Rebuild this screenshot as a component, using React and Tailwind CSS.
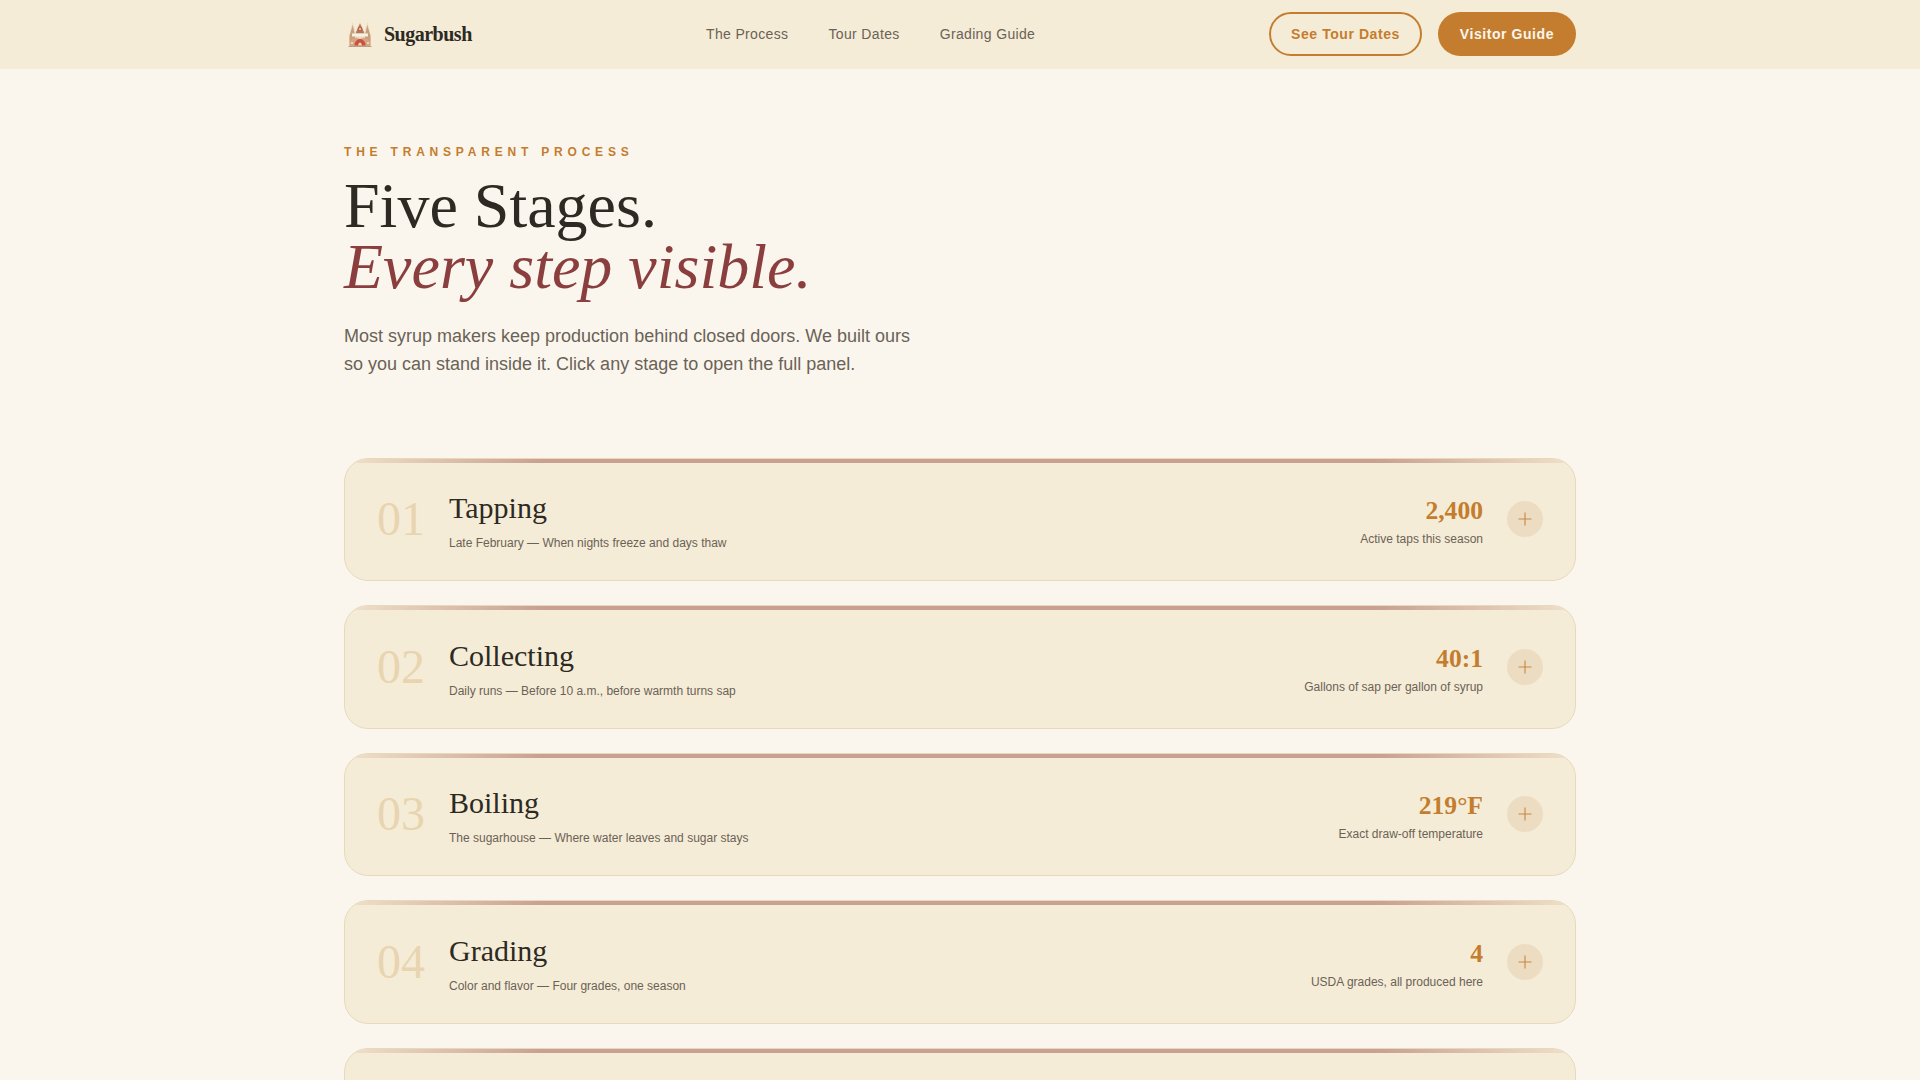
const stages = [
  { num: '01', title: 'Tapping', sub: 'Late February — When nights freeze and days thaw', stat: '2,400', label: 'Active taps this season' },
  { num: '02', title: 'Collecting', sub: 'Daily runs — Before 10 a.m., before warmth turns sap', stat: '40:1', label: 'Gallons of sap per gallon of syrup' },
  { num: '03', title: 'Boiling', sub: 'The sugarhouse — Where water leaves and sugar stays', stat: '219°F', label: 'Exact draw-off temperature' },
  { num: '04', title: 'Grading', sub: 'Color and flavor — Four grades, one season', stat: '4', label: 'USDA grades, all produced here' },
  { num: '05', title: 'Bottling', sub: 'Hot-packed — Sealed the same day', stat: '180°F', label: 'Bottling temperature' },
];

const Logo = () => (
  <svg viewBox="0 0 24 26" className="w-6 h-[26px] shrink-0">
    <path d="M1 25 L1 14 L4.7 1 L7.5 11 L12 0.5 L16.5 11 L19.3 1 L23 14 L23 25 Z" fill="#ecdcc0" />
    <path d="M1.5 15 L4.7 4 L7 15 L7 21 L1.5 21 Z" fill="#c79f7c" />
    <path d="M17 15 L19.3 4 L22.5 15 L22.5 21 L17 21 Z" fill="#c79f7c" />
    <path d="M12 2.5 L16.5 12.5 L7.5 12.5 Z" fill="#a87c60" />
    <circle cx="12" cy="8" r="2.4" fill="#c9614c" />
    <circle cx="12" cy="8" r="0.9" fill="#f0dcc0" />
    <path d="M4 12.5 H20 V15.5 H4 Z" fill="#f7efe0" />
    <path d="M1.5 21 C5 16 9 16 12 18.5 C15 16 19 16 22.5 21 L22.5 25 L1.5 25 Z" fill="#d8a284" />
    <path d="M6.5 24.5 C6.5 20.5 9.5 18 12 18 C14.5 18 17.5 20.5 17.5 24.5 Z" fill="#c9503f" />
    <path d="M10.2 24.5 C10.2 22.5 11 21.5 12 21.5 C13 21.5 13.8 22.5 13.8 24.5 Z" fill="#f0d4b4" />
    <path d="M0.5 25.5 H23.5" stroke="#b3a08c" strokeWidth="1" />
    <circle cx="4" cy="22" r="1" fill="#f3e2c8" />
    <circle cx="20" cy="22" r="1" fill="#f3e2c8" />
  </svg>
);

const StageCard = ({ stage }) => (
  <div className="relative overflow-hidden rounded-[24px] border border-[#e8d9bc] bg-[#f5ecd7] h-[123.5px] px-8 flex items-center">
    <div className="absolute top-0 left-0 right-0 h-1 bg-[linear-gradient(90deg,#f0e2ca,#c9a091_16%,#c9a091_84%,#f0e2ca)]" />
    <div className="font-['Liberation_Serif',serif] text-[48px] leading-none text-[#e8d5b0] w-[72px] whitespace-nowrap">{stage.num}</div>
    <div className="flex-1 min-w-0 pt-[3px]">
      <h3 className="font-['Liberation_Serif',serif] text-[30px] leading-[38px] text-[#2c2a22]">{stage.title}</h3>
      <p className="mt-[7px] text-[12px] leading-[18px] text-[#6b6256]">{stage.sub}</p>
    </div>
    <div className="text-right pt-[5px]">
      <div className="font-['Liberation_Serif',serif] font-bold text-[25.6px] leading-[32px] text-[#c47d2e]">{stage.stat}</div>
      <div className="mt-[3px] text-[12px] leading-[18px] text-[#6b6256]">{stage.label}</div>
    </div>
    <div className="ml-6 w-9 h-9 rounded-full bg-[#ecdcc2] flex items-center justify-center shrink-0">
      <svg viewBox="0 0 16 16" className="w-4 h-4" fill="none" stroke="#c9873f" strokeWidth="1.1">
        <path d="M8 1.5 V14.5 M1.5 8 H14.5" />
      </svg>
    </div>
  </div>
);

export default function App() {
  return (
    <div className="h-screen overflow-hidden bg-[#faf6ee] font-['Liberation_Sans',sans-serif]">
      <nav className="h-[69px] border-b border-[#f5ecd7] bg-[#f5ecd7] flex justify-center">
        <div className="w-[1232px] flex items-center">
          <div className="flex items-center gap-3 w-[362px] pl-[4px]">
            <Logo />
            <span className="font-['Liberation_Serif',serif] font-bold text-[20px] tracking-[-0.5px] text-[#2c2a22]">Sugarbush</span>
          </div>
          <div className="flex items-center gap-10 text-[14px] tracking-[0.35px] text-[#6b6256]">
            <a>The Process</a>
            <a>Tour Dates</a>
            <a>Grading Guide</a>
          </div>
          <div className="ml-auto flex items-center gap-4">
            <button className="h-11 px-5 rounded-full border-2 border-[#c47d2e] text-[14px] font-bold tracking-[0.56px] text-[#c47d2e]">See Tour Dates</button>
            <button className="h-11 px-[22px] rounded-full bg-[#c47d2e] text-[14px] font-bold tracking-[0.56px] text-[#faf6ee]">Visitor Guide</button>
          </div>
        </div>
      </nav>

      <main className="w-[1232px] mx-auto">
        <section className="pt-[75px] pb-[79.5px]">
          <div className="text-[12px] font-bold leading-[16px] tracking-[4.8px] text-[#c47d2e]">THE TRANSPARENT PROCESS</div>
          <h1 className="mt-[15px] font-['Liberation_Serif',serif] text-[64px] leading-[61px] text-[#2c2a22]">
            Five Stages.
            <br />
            <em className="text-[#8b3e3e]">Every step visible.</em>
          </h1>
          <p className="mt-[25px] text-[18px] leading-[28px] text-[#6b6256] w-[580px]">
            Most syrup makers keep production behind closed doors. We built ours so you can stand inside it. Click any stage to open the full panel.
          </p>
        </section>

        <div className="flex flex-col gap-6">
          {stages.map((stage) => (
            <StageCard key={stage.num} stage={stage} />
          ))}
        </div>
      </main>
    </div>
  );
}
